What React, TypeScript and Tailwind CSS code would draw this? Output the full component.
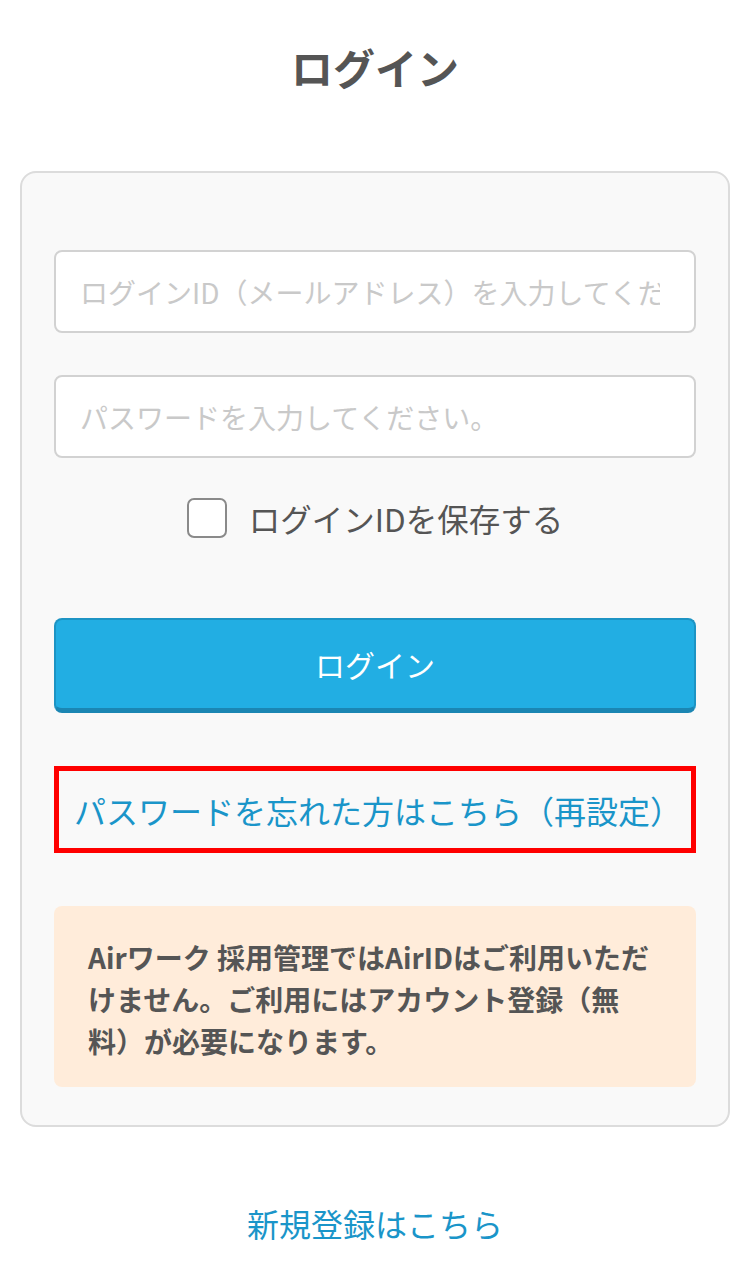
import React from "react";

export default function App() {
  return (
    <div className="w-[750px] min-h-[1272px] bg-white flex flex-col items-center font-['Noto_Sans_CJK_JP','Noto_Sans',sans-serif]">
      <h1 className="mt-[37px] h-[60px] leading-[60px] text-[42px] font-bold text-[#555555]">ログイン</h1>
      <div className="mt-[74px] w-[710px] border-2 border-[#dcdcdc] rounded-[16px] bg-[#f9f9f9] px-[32px] pt-[77px] pb-[38px] flex flex-col">
        <input
          type="text"
          placeholder="ログインID（メールアドレス）を入力してください。"
          className="h-[83px] w-full border-2 border-[#d2d2d2] rounded-[8px] bg-white pl-[24px] pr-[34px] text-[28px] text-[#555555] placeholder:text-[#c9c9c9] outline-none"
        />
        <input
          type="password"
          placeholder="パスワードを入力してください。"
          className="mt-[42px] h-[83px] w-full border-2 border-[#d2d2d2] rounded-[8px] bg-white pl-[24px] pr-[34px] text-[28px] text-[#555555] placeholder:text-[#c9c9c9] outline-none"
        />
        <label className="mt-[40px] h-[40px] flex items-center justify-center gap-[22px]">
          <span className="w-[40px] h-[40px] border-2 border-[#8a8a8a] rounded-[7px] bg-white" />
          <span className="text-[31.5px] leading-[40px] text-[#555555]">ログインIDを保存する</span>
        </label>
        <button className="mt-[80px] h-[95px] w-full rounded-[8px] bg-[#22aee3] border-2 border-[#1d94c4] border-b-[5px] border-b-[#1b86b3] text-white text-[30px]">
          ログイン
        </button>
        <div className="mt-[53px] h-[87px] w-full border-[5px] border-[#ff0000] flex items-center pl-[15px]">
          <span className="text-[32px] text-[#1a95c9] whitespace-nowrap">パスワードを忘れた方はこちら（再設定）</span>
        </div>
        <div className="mt-[53px] w-full rounded-[8px] bg-[#ffecda] pl-[34px] pr-[36px] pt-[30px] pb-[25px]">
          <p className="text-[28px] leading-[42px] font-bold text-[#555555]">
            Airワーク 採用管理ではAirIDはご利用いただけません。ご利用にはアカウント登録（無料）が必要になります。
          </p>
        </div>
      </div>
      <a className="mt-[74px] text-[32px] leading-[44px] text-[#1a95c9]">新規登録はこちら</a>
    </div>
  );
}
